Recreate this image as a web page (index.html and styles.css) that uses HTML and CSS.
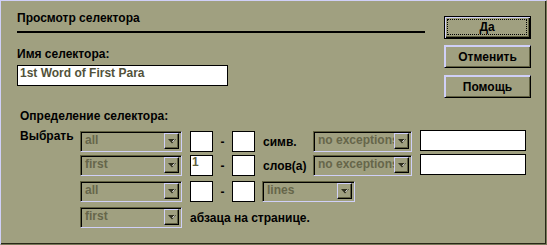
FILE: index.html
```html
<!DOCTYPE html>
<html>
<head>
<meta charset="utf-8">
<link rel="stylesheet" href="styles.css">
</head>
<body>
<div class="window">
  <div class="top">
    <div class="main">
      <div class="title">Просмотр селектора</div>
      <div class="rule"></div>
      <div class="label name-label">Имя селектора:</div>
      <div class="field name-field">1st Word of First Para</div>
    </div>
    <div class="buttons">
      <div class="btn default"><span class="focus">Да</span></div>
      <div class="btn cancel">Отменить</div>
      <div class="btn">Помощь</div>
    </div>
  </div>
  <div class="def">
    <div class="label def-label">Определение селектора:</div>
    <div class="row r1">
      <div class="lead">Выбрать</div>
      <div class="combo c-main"><span class="val">all</span><span class="arrow"><svg width="8" height="5" viewBox="0 0 8 5"><polygon points="0,0 8,0 4,4.5" fill="#303020"/><line x1="6.5" y1="0.5" x2="4.5" y2="3" stroke="#fff" stroke-width="1"/></svg></span></div>
      <div class="box"></div>
      <div class="dash">-</div>
      <div class="box"></div>
      <div class="unit">симв.</div>
      <div class="combo c-exc"><span class="val">no exceptions</span><span class="arrow"><svg width="8" height="5" viewBox="0 0 8 5"><polygon points="0,0 8,0 4,4.5" fill="#303020"/><line x1="6.5" y1="0.5" x2="4.5" y2="3" stroke="#fff" stroke-width="1"/></svg></span></div>
      <div class="field wide"></div>
    </div>
    <div class="row r2">
      <div class="lead"></div>
      <div class="combo c-main"><span class="val">first</span><span class="arrow"><svg width="8" height="5" viewBox="0 0 8 5"><polygon points="0,0 8,0 4,4.5" fill="#303020"/><line x1="6.5" y1="0.5" x2="4.5" y2="3" stroke="#fff" stroke-width="1"/></svg></span></div>
      <div class="box">1</div>
      <div class="dash">-</div>
      <div class="box"></div>
      <div class="unit">слов(а)</div>
      <div class="combo c-exc"><span class="val">no exceptions</span><span class="arrow"><svg width="8" height="5" viewBox="0 0 8 5"><polygon points="0,0 8,0 4,4.5" fill="#303020"/><line x1="6.5" y1="0.5" x2="4.5" y2="3" stroke="#fff" stroke-width="1"/></svg></span></div>
      <div class="field wide"></div>
    </div>
    <div class="row r3">
      <div class="lead"></div>
      <div class="combo c-main"><span class="val">all</span><span class="arrow"><svg width="8" height="5" viewBox="0 0 8 5"><polygon points="0,0 8,0 4,4.5" fill="#303020"/><line x1="6.5" y1="0.5" x2="4.5" y2="3" stroke="#fff" stroke-width="1"/></svg></span></div>
      <div class="box"></div>
      <div class="dash">-</div>
      <div class="box"></div>
      <div class="combo c-lines"><span class="val">lines</span><span class="arrow"><svg width="8" height="5" viewBox="0 0 8 5"><polygon points="0,0 8,0 4,4.5" fill="#303020"/><line x1="6.5" y1="0.5" x2="4.5" y2="3" stroke="#fff" stroke-width="1"/></svg></span></div>
    </div>
    <div class="row r4">
      <div class="lead"></div>
      <div class="combo c-main"><span class="val">first</span><span class="arrow"><svg width="8" height="5" viewBox="0 0 8 5"><polygon points="0,0 8,0 4,4.5" fill="#303020"/><line x1="6.5" y1="0.5" x2="4.5" y2="3" stroke="#fff" stroke-width="1"/></svg></span></div>
      <div class="tail">абзаца на странице.</div>
    </div>
  </div>
</div>
</body>
</html>
```
FILE: styles.css
```css
body {
  margin: 0;
  background: #a0a080;
  font: bold 12px/14px "Liberation Sans", Arial, sans-serif;
  color: #000;
}
.window {
  box-sizing: border-box;
  width: 547px;
  height: 245px;
  background: #a0a080;
  border-top: 1px solid #d0d0f8;
  border-left: 1px solid #d0d0f8;
  border-right: 1px solid #787858;
  border-bottom: 1px solid #787858;
  box-shadow: inset -1px -1px 0 #282818;
}
.top {
  display: flex;
  height: 97px;
}
.main {
  width: 408px;
  margin-left: 16px;
}
.title {
  margin-top: 10px;
  white-space: nowrap;
}
.rule {
  height: 2px;
  background: #000;
  margin-top: 6px;
}
.name-label {
  margin-top: 14px;
}
.field {
  box-sizing: border-box;
  background: #fff;
  border: 1px solid #000;
}
.name-field {
  width: 211px;
  height: 21px;
  margin-top: 4px;
  padding-left: 2px;
  color: #52523a;
  white-space: nowrap;
}
.buttons {
  display: flex;
  flex-direction: column;
  width: 87px;
  margin-left: 19px;
  margin-top: 15px;
}
.btn {
  box-sizing: border-box;
  height: 23px;
  display: flex;
  align-items: center;
  justify-content: center;
  border-top: 1px solid #d0d0f8;
  border-left: 1px solid #d0d0f8;
  border-right: 1px solid #000;
  border-bottom: 1px solid #000;
  box-shadow: inset 1px 1px 0 #d0d0f8, inset -1px -1px 0 #606040;
  margin-top: 7px;
}
.btn.default {
  margin-top: 0;
  border: 1px solid #000;
  box-shadow: inset 1px 1px 0 #d0d0f8, inset -1px -1px 0 #000, inset -2px -2px 0 #606040;
  align-items: stretch;
  padding: 2px 3px 3px 2px;
}
.btn.cancel {
  margin-top: 6px;
}
.focus {
  flex: 1;
  display: flex;
  align-items: center;
  justify-content: center;
  border: 1px dotted #000;
}
.def {
  padding-left: 19px;
}
.def-label {
  margin-top: 11px;
}
.row {
  display: flex;
  align-items: center;
  height: 21px;
}
.r1 { margin-top: 8px; }
.r2 { margin-top: 3px; }
.r3, .r4 { margin-top: 5px; }
.lead {
  width: 60px;
  align-self: flex-start;
  margin-top: -2px;
  white-space: nowrap;
}
.combo {
  box-sizing: border-box;
  height: 21px;
  display: flex;
  align-items: flex-start;
  border-top: 1px solid #606040;
  border-left: 1px solid #606040;
  border-right: 1px solid #d0d0f8;
  border-bottom: 1px solid #d0d0f8;
  box-shadow: inset 1px 1px 0 #000;
  padding: 1px 2px 2px 0;
}
.c-main { width: 102px; }
.c-exc { width: 99px; }
.c-lines { width: 93px; margin-left: 7px; }
.val {
  flex: 1;
  min-width: 0;
  overflow: hidden;
  white-space: nowrap;
  padding-left: 4px;
  color: #66664a;
}
.arrow {
  box-sizing: border-box;
  flex: none;
  width: 15px;
  height: 16px;
  display: flex;
  align-items: center;
  justify-content: center;
  background: #a0a080;
  border-top: 1px solid #d0d0f8;
  border-left: 1px solid #d0d0f8;
  border-right: 1px solid #000;
  border-bottom: 1px solid #000;
  box-shadow: inset -1px -1px 0 #606040;
}
.arrow svg {
  display: block;
}
.box {
  box-sizing: border-box;
  width: 23px;
  height: 21px;
  background: #fff;
  border: 1px solid #000;
  padding-left: 1px;
  line-height: 12px;
  color: #606040;
}
.combo + .box {
  margin-left: 8px;
}
.dash {
  width: 19px;
  text-align: center;
}
.unit {
  width: 50px;
  margin-left: 8px;
  white-space: nowrap;
}
.wide {
  width: 106px;
  height: 21px;
  margin-left: 8px;
  align-self: flex-start;
  margin-top: -1px;
}
.tail {
  margin-left: 8px;
  white-space: nowrap;
}
```
